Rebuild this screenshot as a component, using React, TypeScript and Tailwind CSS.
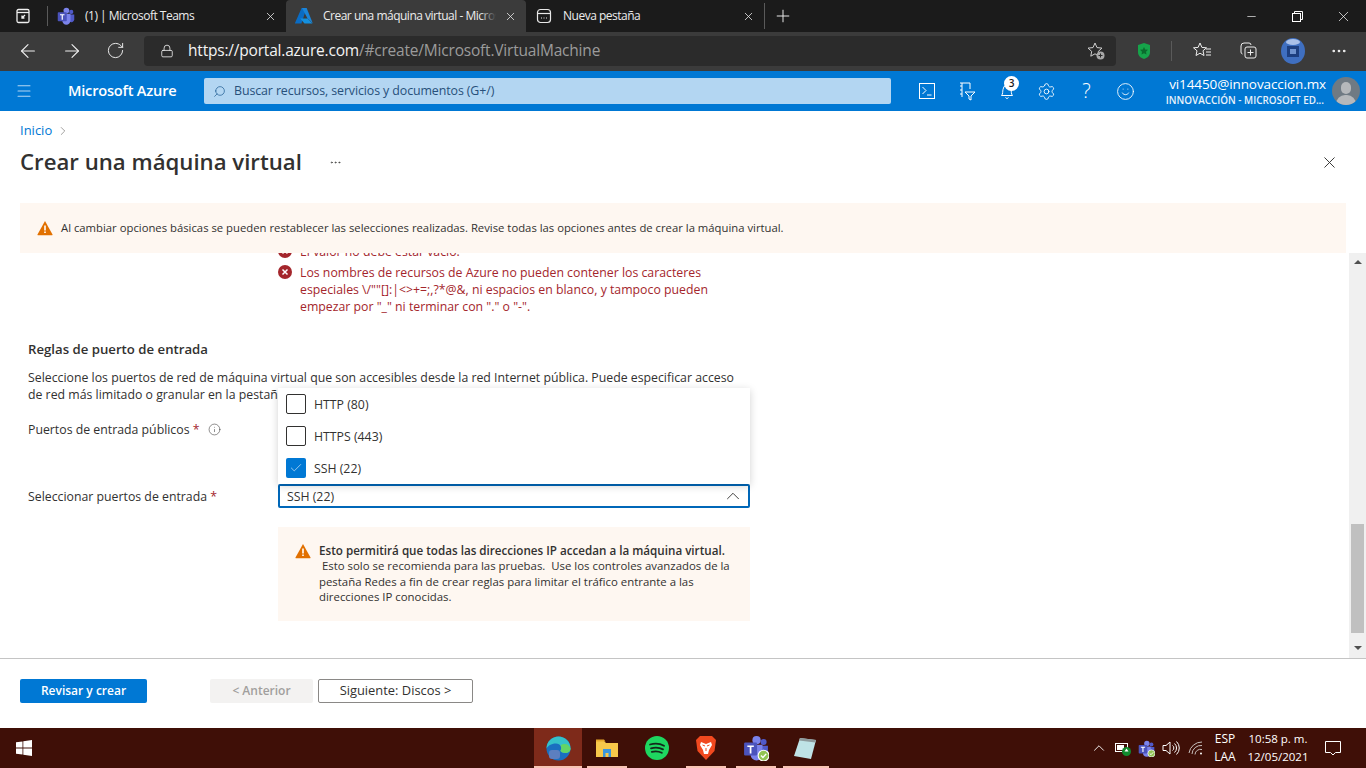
import {
  ArrowLeft,
  ArrowRight,
  Check,
  ChevronRight,
  ChevronUp,
  Info,
  Lock,
  Menu,
  Minus,
  MoreHorizontal,
  Plus,
  RotateCw,
  Search,
  Settings,
  Smile,
  X,
} from 'lucide-react'

const font = "font-['Open_Sans',sans-serif]"

const AzureLogo = () => (
  <svg width="18" height="16" viewBox="0 0 18 16">
    <path d="M6.6 0h5L6.4 15.5H.6a.5.5 0 0 1-.5-.7z" fill="#0a6cc4" />
    <path d="M12.6 10.4H5.2l4.3 5.1h8z" fill="#1490df" />
    <path d="M7 0h4.6l6.2 15.2-5.4-5z" fill="#1b84d8" />
  </svg>
)

const TeamsIcon = ({ size = 20, check = false }: { size?: number; check?: boolean }) => (
  <svg width={size} height={size} viewBox="0 0 24 24">
    <circle cx="19" cy="6.5" r="2.8" fill="#5059c9" />
    <path d="M15 10h8v7a4 4 0 0 1-6 2.8z" fill="#5059c9" />
    <circle cx="12.5" cy="4.8" r="3.8" fill="#7b83eb" />
    <path d="M7 9h11v9a5.5 5.5 0 0 1-11 0z" fill="#7b83eb" />
    <rect x="1" y="7" width="12" height="12" rx="1" fill="#4b53bc" />
    <path d="M4 9.6h6v1.5H7.8v6H6.2v-6H4z" fill="#fff" />
    {check && (
      <>
        <circle cx="19" cy="19" r="5" fill="#92c353" stroke="#fff" strokeWidth="1" />
        <path d="M16.6 19l1.8 1.8 3-3.4" stroke="#fff" strokeWidth="1.3" fill="none" />
      </>
    )}
  </svg>
)

const BrowserTab = ({
  icon,
  label,
  active,
  width,
}: {
  icon: React.ReactNode
  label: string
  active?: boolean
  width: string
}) => (
  <div
    className={`relative flex h-full items-center pl-[9px] pr-[9px] ${width} ${
      active ? 'rounded-t-[4px] bg-[#3b3b3b]' : ''
    }`}
  >
    <div className="flex w-[18px] shrink-0 items-center justify-center">{icon}</div>
    <div className="relative ml-[10px] min-w-0 flex-1 overflow-hidden whitespace-nowrap text-[12px] tracking-[-0.5px] text-[#ececec]">
      {label}
      {active && (
        <div className="absolute inset-y-0 right-0 w-[16px] bg-gradient-to-r from-transparent to-[#3b3b3b]" />
      )}
    </div>
    <X size={13} strokeWidth={1.5} className="ml-[8px] shrink-0 text-[#e5e5e5]" />
  </div>
)

const TabStrip = () => (
  <div className="flex h-[32px] items-center bg-[#1b1b1b]">
    <div className="flex w-[47px] shrink-0 justify-center pr-[1px]">
      <svg width="16" height="16" viewBox="0 0 16 16" fill="none" stroke="#f0f0f0" strokeWidth="1.3">
        <rect x="2" y="1.5" width="12" height="13" rx="1.5" />
        <path d="M2 4.5h12" />
        <path d="M10 7l-3 3M7 7.6V10h2.4" />
      </svg>
    </div>
    <div className="h-[20px] w-px bg-[#5a5a5a]" />
    <BrowserTab icon={<TeamsIcon size={18} />} label="(1) | Microsoft Teams" width="w-[238px]" />
    <BrowserTab icon={<AzureLogo />} label="Crear una máquina virtual - Microsoft Azure" active width="w-[240px]" />
    <BrowserTab
      icon={
        <svg width="16" height="16" viewBox="0 0 16 16" fill="none" stroke="#e8e8e8" strokeWidth="1.2">
          <rect x="1.5" y="1.5" width="13" height="13" rx="3" />
          <path d="M1.5 5.5h13" />
          <path d="M5 10h1M7.5 10h1M10 10h1" />
        </svg>
      }
      label="Nueva pestaña"
      width="w-[238px]"
    />
    <div className="h-[26px] w-px bg-[#5a5a5a]" />
    <Plus size={20} strokeWidth={1.2} className="ml-[8px] text-[#e8e8e8]" />
    <div className="ml-auto flex items-center">
      <div className="flex w-[46px] justify-center">
        <Minus size={13} strokeWidth={1.2} className="text-white" />
      </div>
      <div className="flex w-[46px] justify-center">
        <svg width="11" height="11" viewBox="0 0 11 11" fill="none" stroke="#fff">
          <rect x="0.5" y="2.5" width="8" height="8" />
          <path d="M2.5 2.5v-2h8v8h-2" />
        </svg>
      </div>
      <div className="flex w-[46px] justify-center">
        <X size={17} strokeWidth={1} className="text-white" />
      </div>
    </div>
  </div>
)

const AddressBar = () => (
  <div className="flex h-[39px] items-center bg-[#3b3b3b] pb-[2px]">
    <div className="flex w-[144px] shrink-0 items-center pl-[17px] text-[#f0f0f0]">
      <ArrowLeft size={22} strokeWidth={1.2} />
      <ArrowRight size={22} strokeWidth={1.2} className="ml-[22px]" />
      <RotateCw size={19} strokeWidth={1.2} className="ml-[23px]" />
    </div>
    <div className="flex h-[30px] w-[972px] items-center rounded-[4px] bg-[#2b2b2b] pl-[16px] pr-[10px]">
      <Lock size={14} strokeWidth={1.4} className="text-[#f0f0f0]" />
      <span className="ml-[14px] text-[15.5px] tracking-[-0.2px] text-[#f3f3f3]">
        https://portal.azure.com<span className="text-[#9b9b9b]">/#create/Microsoft.VirtualMachine</span>
      </span>
      <svg className="ml-auto" width="20" height="20" viewBox="0 0 20 20" fill="none">
        <path d="M9 2l2 4.6 5 .5-3.7 3.3.9 4.8L9 12.8l-4.2 2.4.9-4.8L2 7.1l5-.5z" stroke="#cfcfcf" />
        <circle cx="14.5" cy="14.5" r="4" fill="#a8a8a8" />
        <path d="M14.5 12.5v4M12.5 14.5h4" stroke="#2b2b2b" />
      </svg>
    </div>
    <div className="flex flex-1 items-center pl-[20px]">
      <svg width="16" height="18" viewBox="0 0 16 18">
        <path d="M8 1l6 2v7c0 4-3 6-6 7-3-1-6-3-6-7V3z" fill="#16a34a" />
        <path d="M8 5l1.2 2.5 2.8.3-2 1.9.5 2.8L8 11.2l-2.5 1.3.5-2.8-2-1.9 2.8-.3z" fill="#0b6b2e" />
      </svg>
      <div className="ml-[19px] h-[20px] w-px bg-[#5a5a5a]" />
      <svg className="ml-[20px]" width="20" height="20" viewBox="0 0 20 20" fill="none" stroke="#eee">
        <path d="M8 2l1.900 4.400 4.600.4-3.500 3 1 4.700L8 12.200l-4 2.300 1-4.700-3.500-3 4.600-.4z" />
        <path d="M14 8h5M14 11h5M14 14h5" />
      </svg>
      <svg className="ml-[26px]" width="20" height="20" viewBox="0 0 20 20" fill="none" stroke="#eee">
        <rect x="7" y="6" width="11" height="11" rx="2" />
        <path d="M12.500 8.500v6M9.500 11.500h6M4.500 13A2 2 0 0 1 3 11V5a3 3 0 0 1 3-3h5a2 2 0 0 1 2 2" />
      </svg>
      <svg className="ml-[23px]" width="24" height="26" viewBox="0 0 24 26">
        <ellipse cx="12" cy="13" rx="12" ry="13" fill="#3f6fc0" />
        <ellipse cx="12" cy="4" rx="7" ry="3" fill="#a9c0e8" />
        <rect x="6" y="8" width="12" height="11" fill="#1d3f80" />
        <rect x="9" y="11" width="6" height="5" fill="#6f93cf" />
      </svg>
      <MoreHorizontal size={18} strokeWidth={1.6} className="ml-[25px] text-[#eee]" />
    </div>
  </div>
)

const AzureHeader = () => (
  <div className="flex h-[40px] items-center bg-[#0078d4]">
    <Menu size={18} strokeWidth={1.4} className="ml-[15px] text-[#b4d6f2]" />
    <span className="ml-[35px] w-[136px] text-[14.6px] font-semibold tracking-[-0.2px] text-white">Microsoft Azure</span>
    <div className="flex h-[26px] w-[687px] items-center rounded-[2px] bg-[#b3d6f2] pl-[9px]">
      <Search size={13} strokeWidth={1.3} className="-scale-x-100 text-[#1c5a90]" />
      <span className="ml-[8px] text-[12.4px] tracking-[-0.1px] text-[#27507a]">
        Buscar recursos, servicios y documentos (G+/)
      </span>
    </div>
    <div className="ml-[26px] flex items-center text-white">
      <div className="flex w-[20px] justify-center">
        <svg width="18" height="18" viewBox="0 0 18 18" fill="none" stroke="#fff">
          <rect x="1.5" y="1.5" width="15" height="15" />
          <path d="M4.500 5l3.500 3.500L4.500 12M9 13h4.500" />
        </svg>
      </div>
      <div className="ml-[20px] flex w-[20px] justify-center">
        <svg width="18" height="20" viewBox="0 0 18 20" fill="none" stroke="#fff">
          <path d="M2 2h10v6M4 2v14M2 5h2M2 9h2M2 13h2M7 11h10l-4 4v4l-2-1v-3z" />
        </svg>
      </div>
      <div className="relative ml-[20px] flex w-[20px] justify-center">
        <svg width="18" height="18" viewBox="0 0 18 18" fill="none" stroke="#fff">
          <path d="M3.500 13.500c1.500-1.500 1-4 1.500-6a4 4 0 0 1 8 0c.5 2 0 4.500 1.500 6zM7.500 15.500a1.700 1.700 0 0 0 3 0" />
        </svg>
        <span className="absolute -right-[2px] -top-[6px] flex h-[15px] w-[15px] items-center justify-center rounded-full bg-white text-[10px] font-semibold text-[#1a1a1a]">
          3
        </span>
      </div>
      <Settings size={19} strokeWidth={1.1} className="ml-[20px]" />
      <span className="ml-[23px] w-[15px] text-center text-[20px] font-light leading-none">?</span>
      <Smile size={19} strokeWidth={1.1} className="ml-[22px]" />
    </div>
    <div className="ml-auto flex flex-col items-end pt-[1px]">
      <span className="text-[13.5px] leading-[17px] tracking-[-0.1px] text-white">vi14450@innovaccion.mx</span>
      <span className="mr-[2px] text-[9.9px] font-semibold leading-[14px] text-[#e8f2fb]">INNOVACCIÓN - MICROSOFT ED...</span>
    </div>
    <div className="relative ml-[6px] mr-[6px] h-[28px] w-[28px] overflow-hidden rounded-full bg-[#6f7a83]">
      <div className="mx-auto mt-[5px] h-[12px] w-[10px] rounded-full bg-[#b5b8bb]" />
      <div className="absolute left-[4px] top-[18px] h-[14px] w-[20px] rounded-t-[9px] bg-[#b5b8bb]" />
    </div>
  </div>
)

const WarningIcon = ({ size = 16 }: { size?: number }) => (
  <svg width={size} height={size} viewBox="0 0 16 16" className="shrink-0">
    <path d="M8 1l7.500 13.500a.5.5 0 0 1-.4.700H.9a.5.5 0 0 1-.4-.7z" fill="#e17000" />
    <path d="M7.200 5.500h1.600v5H7.200zM7.200 11.500h1.600v1.600H7.200z" fill="#fff" />
  </svg>
)

const ErrorIcon = () => (
  <svg width="14" height="14" viewBox="0 0 14 14" className="mt-[1px] shrink-0">
    <circle cx="7" cy="7" r="7" fill="#a4262c" />
    <path d="M4.500 4.500l5 5M9.500 4.500l-5 5" stroke="#fff" strokeWidth="1.500" />
  </svg>
)

const CheckRow = ({ label, checked }: { label: string; checked?: boolean }) => (
  <div className="flex h-[32px] items-center pl-[8px]">
    <div
      className={`flex h-[20px] w-[20px] items-center justify-center rounded-[2px] ${
        checked ? 'bg-[#0078d4]' : 'border border-[#323130]'
      }`}
    >
      {checked && <Check size={14} strokeWidth={1} className="text-white" />}
    </div>
    <span className="ml-[8px] text-[#323130]">{label}</span>
  </div>
)

const Required = () => <span className="text-[#a4262c]"> *</span>

const FormBody = () => (
  <div className="min-w-0 flex-1 overflow-hidden pl-[28px] text-[12.3px] leading-[17px] text-[#323130]">
    <div className="-mt-[10px] ml-[250px] w-[444px] text-[#a4262c]">
      <div className="flex gap-[8px]">
        <ErrorIcon />
        <span>El valor no debe estar vacío.</span>
      </div>
      <div className="mt-[4px] flex gap-[8px]">
        <ErrorIcon />
        <span>
          Los nombres de recursos de Azure no pueden contener los caracteres especiales \/""[]:|&lt;&gt;+=;,?*@&amp;, ni
          espacios en blanco, y tampoco pueden empezar por "_" ni terminar con "." o "-".
        </span>
      </div>
    </div>

    <h3 className="mt-[26px] text-[13.2px] font-semibold text-[#323130]">Reglas de puerto de entrada</h3>
    <p className="mt-[11px] w-[715px]">
      Seleccione los puertos de red de máquina virtual que son accesibles desde la red Internet pública. Puede
      especificar acceso de red más limitado o granular en la pestaña Redes.
    </p>

    <div className="mt-[18px] flex items-center">
      <span>
        Puertos de entrada públicos
        <Required />
      </span>
      <Info size={13} strokeWidth={1} className="ml-[9px] text-[#323130]" />
    </div>

    <div className="mt-[46px] flex items-center">
      <span className="w-[250px]">
        Seleccionar puertos de entrada
        <Required />
      </span>
      <div className="relative w-[472px]">
        <div className="absolute bottom-full left-0 w-full bg-white shadow-[0_2px_8px_rgba(0,0,0,0.18)]">
          <CheckRow label="HTTP (80)" />
          <CheckRow label="HTTPS (443)" />
          <CheckRow label="SSH (22)" checked />
        </div>
        <div className="flex h-[24px] items-center rounded-[2px] border-2 border-[#0067b8] pl-[7px] pr-[7px]">
          <span>SSH (22)</span>
          <ChevronUp size={22} strokeWidth={1} className="ml-auto mr-[-3px] text-[#323130]" />
        </div>
      </div>
    </div>

    <div className="ml-[250px] mt-[19px] flex h-[94px] w-[472px] bg-[#fef7f1] pl-[17px] pr-[16px] pt-[16px] text-[11.4px] leading-[15.3px]">
      <WarningIcon />
      <div className="ml-[8px]">
        <b className="text-[11.65px] font-semibold">Esto permitirá que todas las direcciones IP accedan a la máquina virtual.</b>
        <p>&nbsp;Esto solo se recomienda para las pruebas.&nbsp; Use los controles avanzados de la pestaña Redes a fin de crear reglas para limitar el tráfico entrante a las direcciones IP conocidas.</p>
      </div>
    </div>
  </div>
)

const ScrollTrack = () => (
  <div className="flex w-[17px] shrink-0 flex-col items-center bg-[#f0f0f0]">
    <div className="mt-[7px] h-0 w-0 border-x-[4px] border-b-[4px] border-x-transparent border-b-[#505050]" />
    <div className="mt-[260px] h-[109px] w-[13px] bg-[#c0c0c0]" />
    <div className="mt-[13px] h-0 w-0 border-x-[4px] border-t-[4px] border-x-transparent border-t-[#505050]" />
  </div>
)

const Footer = () => (
  <div className="flex h-[70px] items-start border-t border-[#c4c4c4] pl-[20px] pt-[20px] text-[12px]">
    <button className="h-[24px] w-[127px] rounded-[2px] bg-[#0078d4] font-semibold text-white">Revisar y crear</button>
    <button className="ml-[63px] h-[24px] w-[103px] rounded-[2px] bg-[#f3f2f1] font-semibold text-[#a19f9d]">
      &lt; Anterior
    </button>
    <button className="ml-[5px] h-[24px] w-[155px] rounded-[2px] border border-[#8a8886] text-[12.9px] font-medium text-[#323130]">
      Siguiente: Discos &gt;
    </button>
  </div>
)

const Portal = () => (
  <div className="flex h-[617px] flex-col bg-white">
    <div className="flex h-[92px] flex-col px-[20px]">
      <div className="mt-[11px] flex h-[17px] items-center text-[13px] text-[#0078d4]">
        <span>Inicio</span>
        <ChevronRight size={14} strokeWidth={1} className="ml-[4px] text-[#605e5c]" />
      </div>
      <div className="mt-[7px] flex h-[32px] items-center">
        <h1 className="text-[22.2px] font-semibold text-[#323130]">Crear una máquina virtual</h1>
        <MoreHorizontal size={13} strokeWidth={1.2} className="ml-[27px] text-[#323130]" />
        <X size={19} strokeWidth={1.2} className="ml-auto mr-[7px] text-[#323130]" />
      </div>
    </div>
    <div className="mx-[20px] flex h-[50px] items-center bg-[#fef7f1] pl-[17px] text-[11.3px] text-[#323130]">
      <WarningIcon />
      <span className="ml-[8px]">
        Al cambiar opciones básicas se pueden restablecer las selecciones realizadas. Revise todas las opciones antes de
        crear la máquina virtual.
      </span>
    </div>
    <div className="flex h-[405px] min-h-0">
      <FormBody />
      <ScrollTrack />
    </div>
    <Footer />
  </div>
)

const TaskItem = ({
  children,
  width,
  active,
  bar,
}: {
  children: React.ReactNode
  width: string
  active?: boolean
  bar?: string
}) => (
  <div className={`relative flex h-full items-center justify-center ${width} ${active ? 'bg-[#7e2a1a]' : ''}`}>
    {children}
    {active && <div className="absolute bottom-0 left-0 h-[2px] w-full bg-[#f8c4b4]" />}
    {bar && <div className={`absolute bottom-0 h-[2px] bg-[#f8c4b4] ${bar}`} />}
  </div>
)

const Taskbar = () => (
  <div className="flex h-[40px] items-center bg-[#3f0f07] text-white">
    <svg className="ml-[16px]" width="16" height="16" viewBox="0 0 16 16" fill="#fff">
      <path d="M0 2.300l6.500-.9v6.200H0zM7.300 1.300L16 0v7.600H7.300zM0 8.400h6.500v6.200L0 13.700zM7.300 8.400H16V16l-8.700-1.300z" />
    </svg>
    <div className="ml-[502px] flex h-full items-center">
      <TaskItem width="w-[48px]" active>
        <svg width="25" height="25" viewBox="0 0 25 25">
          <circle cx="12.500" cy="12.500" r="12" fill="#1a6fc0" />
          <path d="M.5 12.500a12 12 0 0 1 24 0c0 3-2.500 4.500-5 4.500-3 0-5-1-5-2.500 2-2.500 0-7-4.500-7-5 0-8 2.500-9.500 5z" fill="#35c1c9" />
          <path d="M24.500 12.500c0 3-2.500 4.500-5 4.500-3 0-5-1-5-2.500 1-1.500 1-3.500 0-5 4-3 9-1 10 3z" fill="#63d465" />
          <rect x="3" y="14" width="11" height="9" rx="3" fill="#5c7fc0" />
        </svg>
      </TaskItem>
      <TaskItem width="w-[50px]" bar="left-[5px] w-[40px]">
        <svg width="22" height="20" viewBox="0 0 22 20">
          <path d="M0 3h8l2 2h12v14H0z" fill="#f7c84a" />
          <path d="M0 1.500h8l1.500 2H0z" fill="#e5a82a" />
          <path d="M7 11h8v8h-2.500v-4h-3v4H7z" fill="#3a96dd" />
        </svg>
      </TaskItem>
      <TaskItem width="w-[49px]">
        <svg width="24" height="24" viewBox="0 0 24 24" fill="none">
          <circle cx="12" cy="12" r="12" fill="#1ed760" />
          <path d="M5 8.500c4.500-1.300 10-1 14 1.200M6 12.300c4-1 8.500-.8 12 1.100M6.800 15.800c3.300-.8 7-.6 10 1" stroke="#14291b" strokeWidth="1.800" strokeLinecap="round" />
        </svg>
      </TaskItem>
      <TaskItem width="w-[50px]" bar="left-[5px] w-[40px]">
        <svg width="22" height="26" viewBox="0 0 22 26">
          <path d="M5 1h12l4 4-1.500 11L11 25 2.500 16 1 5z" fill="#f1491f" />
          <path d="M6 7l5 2 5-2 1 3-3 5-1 4h-4l-1-4-3-5z" fill="#fff" />
          <path d="M7.500 10l2.500 1M14.500 10l-2.500 1M11 13v3" stroke="#f1491f" fill="none" />
        </svg>
      </TaskItem>
      <TaskItem width="w-[49px]" bar="left-[5px] w-[40px]">
        <TeamsIcon size={26} check />
      </TaskItem>
      <TaskItem width="w-[49px]" bar="left-[3px] w-[46px]">
        <svg width="24" height="24" viewBox="0 0 24 24">
          <path d="M7 2l16 2-5 19-17-3z" fill="#bfe3e6" />
          <path d="M7 2l16 2-.7 2.500L6 4.500z" fill="#8e9a9c" />
        </svg>
      </TaskItem>
    </div>
    <div className="ml-auto flex items-center">
      <ChevronUp size={18} strokeWidth={1.2} />
      <svg className="ml-[7px]" width="16" height="16" viewBox="0 0 16 16">
        <rect x="0.500" y="3.500" width="12" height="8" fill="none" stroke="#fff" />
        <rect x="2" y="5" width="7" height="5" fill="#fff" />
        <circle cx="11.500" cy="11.500" r="4.500" fill="#118a2e" />
        <path d="M11.500 8.500l2 3h-4z" fill="#fff" />
      </svg>
      <div className="ml-[7px]">
        <TeamsIcon size={17} check />
      </div>
      <svg className="ml-[7px]" width="18" height="16" viewBox="0 0 18 16" fill="none" stroke="#fff">
        <path d="M1 5.500h3l4-3.500v12l-4-3.500H1zM10.500 5.500a3 3 0 0 1 0 5M12.500 3.500a6 6 0 0 1 0 9M14.500 1.500a9 9 0 0 1 0 13" />
      </svg>
      <svg className="ml-[8px]" width="16" height="16" viewBox="0 0 16 16" fill="none" stroke="#c8c0bd">
        <path d="M1 13a13 13 0 0 1 13-11M4 14a9 9 0 0 1 10-8.500M7 14.500a5.500 5.500 0 0 1 7-5" />
        <circle cx="13" cy="13.500" r="1" fill="#fff" stroke="none" />
      </svg>
      <div className="ml-[6px] w-[30px] text-center text-[12px] leading-[18px]">
        <div>ESP</div>
        <div>LAA</div>
      </div>
      <div className="ml-[3px] w-[70px] text-center text-[11.5px] leading-[18px]">
        <div>10:58 p. m.</div>
        <div>12/05/2021</div>
      </div>
      <svg className="ml-[12px] mr-[25px]" width="16" height="16" viewBox="0 0 16 16" fill="none" stroke="#fff">
        <path d="M.5 1.500h15v11h-5l-2.500 2.500-2.500-2.500h-5z" />
      </svg>
    </div>
  </div>
)

export default function App() {
  return (
    <div className={`flex h-[768px] w-[1366px] flex-col overflow-hidden ${font}`}>
      <TabStrip />
      <AddressBar />
      <AzureHeader />
      <Portal />
      <Taskbar />
    </div>
  )
}
